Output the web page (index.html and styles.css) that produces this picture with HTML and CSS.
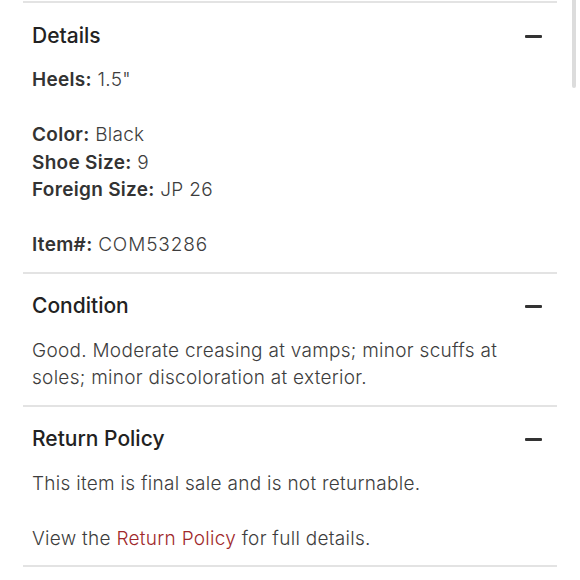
FILE: index.html
```html
<!DOCTYPE html>
<html>
<head>
<meta charset="utf-8">
<link rel="stylesheet" href="styles.css">
</head>
<body>
<div class="page">
  <section class="panel">
    <div class="panel-head">
      <h2>Details</h2>
      <span class="minus"></span>
    </div>
    <div class="panel-body">
      <p><b>Heels:</b> 1.5"</p>
      <p class="blank">&nbsp;</p>
      <p><b>Color:</b> Black</p>
      <p><b>Shoe Size:</b> 9</p>
      <p><b>Foreign Size:</b> JP 26</p>
      <p class="blank">&nbsp;</p>
      <p><b>Item#:</b> <span class="num">COM53286</span></p>
    </div>
  </section>
  <section class="panel">
    <div class="panel-head">
      <h2>Condition</h2>
      <span class="minus"></span>
    </div>
    <div class="panel-body">
      <p>Good. Moderate creasing at vamps; minor scuffs at soles; minor discoloration at exterior.</p>
    </div>
  </section>
  <section class="panel last">
    <div class="panel-head">
      <h2>Return Policy</h2>
      <span class="minus"></span>
    </div>
    <div class="panel-body">
      <p>This item is final sale and is not returnable.</p>
      <p class="blank">&nbsp;</p>
      <p>View the <a href="#">Return Policy</a> for full details.</p>
    </div>
  </section>
</div>
<div class="scrollbar"></div>
</body>
</html>
```
FILE: styles.css
```css
html, body {
  margin: 0;
  padding: 0;
  background: #fff;
}
body {
  font-family: Inter, "Liberation Sans", sans-serif;
  color: #333;
}
.page {
  width: 534px;
  margin-left: 23px;
  padding-top: 1px;
}
.panel {
  border-top: 2px solid #e3e3e3;
  padding: 0 0 13px 9px;
}
.panel.last {
  border-bottom: 2px solid #e3e3e3;
}
.panel-head {
  display: flex;
  align-items: center;
  justify-content: space-between;
  height: 24px;
  padding-top: 20px;
  padding-right: 15px;
}
.panel-head h2 {
  margin: 0;
  font-size: 21px;
  font-weight: 500;
  color: #222;
  line-height: 25px;
  letter-spacing: 0;
}
.minus {
  width: 17px;
  height: 3px;
  background: #333;
  border-radius: 1px;
  margin-top: 2px;
}
.panel-body {
  padding-top: 19px;
  padding-right: 40px;
}
.panel-body p {
  margin: 0;
  font-size: 19px;
  line-height: 27.5px;
  font-weight: 300;
  color: #3d3d3d;
  letter-spacing: 0.28px;
}
.panel-body b {
  font-weight: 600;
  color: #333;
  letter-spacing: 0.3px;
}
.panel-body .num {
  letter-spacing: 0.9px;
}
.panel-body a {
  color: #a0282b;
  text-decoration: none;
}
.scrollbar {
  position: fixed;
  top: 0;
  right: 4px;
  width: 4px;
  height: 88px;
  background: #dcdcdc;
  border-radius: 0 0 2px 2px;
}
```
